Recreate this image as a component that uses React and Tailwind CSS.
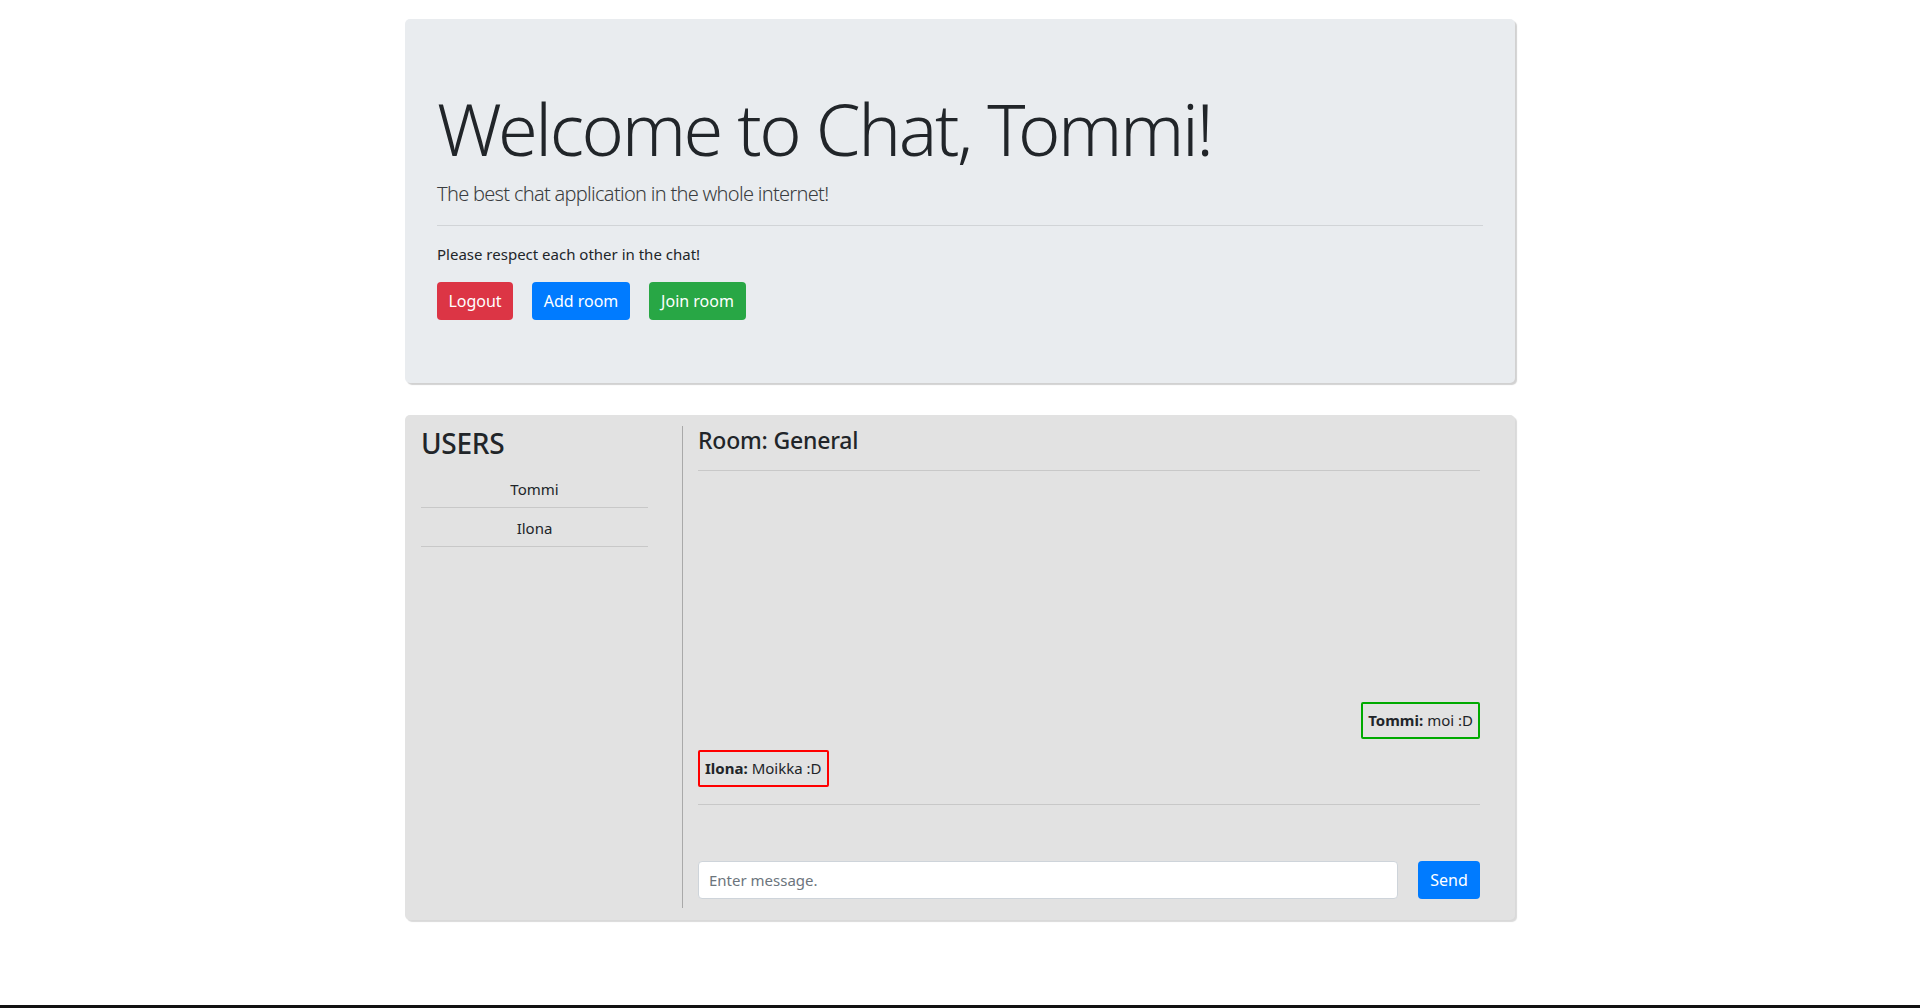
import React from "react";

export default function App() {
  const font = "font-['Noto_Sans','Open_Sans',sans-serif]";
  return (
    <div className={`min-h-[1008px] h-[1008px] bg-white flex flex-col text-[#212529] ${font}`}>
      <div className="w-[1110px] mx-auto pt-[19px]">
        {/* Jumbotron */}
        <div className="h-[364px] bg-[#e9ecef] rounded-[5px] px-8 pt-[66px] shadow-[2px_2px_1px_rgba(0,0,0,0.18)]">
          <h1 className="text-[72px] font-light leading-[1.2] mb-2 tracking-[-2.4px]">Welcome to Chat, Tommi!</h1>
          <p className="text-[20px] font-light leading-[30px] mb-4 text-[#3a3d40] tracking-[-0.7px]">The best chat application in the whole internet!</p>
          <div className="border-t border-[#d1d4d7] mb-4"></div>
          <p className="text-[15px] leading-6 mb-4">Please respect each other in the chat!</p>
          <div className="flex gap-[19px]">
            <button className="w-[76px] h-[38px] rounded-[4px] bg-[#dc3545] text-white text-[16px]">Logout</button>
            <button className="w-[98px] h-[38px] rounded-[4px] bg-[#007bff] text-white text-[16px]">Add room</button>
            <button className="w-[97px] h-[38px] rounded-[4px] bg-[#28a745] text-white text-[16px]">Join room</button>
          </div>
        </div>

        {/* Chat panel */}
        <div className="mt-[32px] h-[505px] bg-[#e2e2e2] rounded-[5px] shadow-[2px_2px_1px_rgba(0,0,0,0.15)] flex pt-[11px] pb-[12px]">
          <div className="w-[277px] pl-[16px] shrink-0">
            <h3 className="text-[28px] font-medium leading-[34px] h-[34px] mb-[9px] tracking-[-0.3px]">USERS</h3>
            <div className="w-[227px]">
              {["Tommi", "Ilona"].map((u) => (
                <div key={u} className="pt-[8px] pb-[6px] leading-6 text-[15px] text-center border-b border-[#c8c8c8]">{u}</div>
              ))}
            </div>
          </div>
          <div className="flex-1 border-l border-[#a9a9a9] pl-[15px] pr-[35px] flex flex-col">
            <h4 className="text-[23px] font-medium leading-[29px] h-[29px] tracking-[-0.2px]">Room: General</h4>
            <div className="mt-[15px] border-t border-[#c8c8c8]"></div>
            <div className="flex-1 flex flex-col justify-end gap-[11px] pb-[17px]">
              <div className="self-end h-[37px] px-[5px] flex items-center border-2 border-[#00aa00] rounded-[2px] text-[15px]">
                <b className="font-bold mr-[4px]">Tommi:</b> moi :D
              </div>
              <div className="self-start h-[37px] px-[5px] flex items-center border-2 border-[#ff0000] rounded-[2px] text-[15px]">
                <b className="font-bold mr-[4px]">Ilona:</b> Moikka :D
              </div>
            </div>
            <div className="border-t border-[#c8c8c8]"></div>
            <div className="mt-[56px] mb-[9px] flex gap-[20px]">
              <input
                className="w-[700px] h-[38px] bg-white border border-[#ced4da] rounded-[4px] px-[10px] text-[15px] placeholder:text-[#6c757d] outline-none"
                placeholder="Enter message."
              />
              <button className="w-[62px] h-[38px] rounded-[4px] bg-[#007bff] text-white text-[16px]">Send</button>
            </div>
          </div>
        </div>
      </div>
      <div className="flex-1"></div>
      <div className="h-[3px] bg-[#111]"></div>
    </div>
  );
}
